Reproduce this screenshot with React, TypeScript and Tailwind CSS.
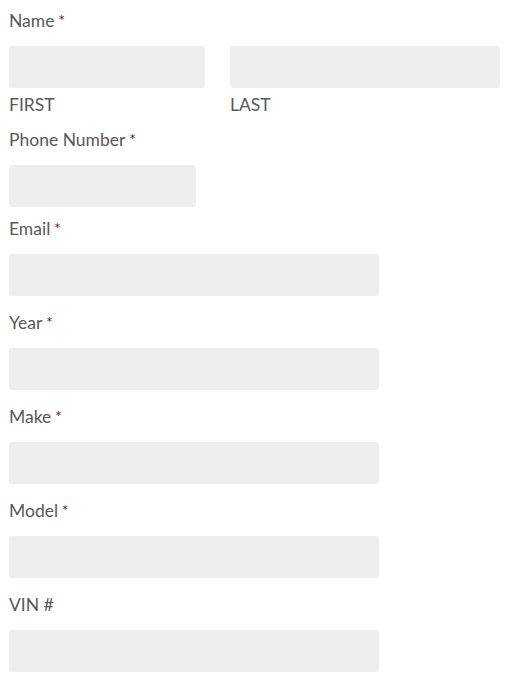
const labelCls = "block text-[17.5px] leading-[26px] text-[#585858]";
const inputCls = "block h-[42px] rounded-[3px] bg-[#eee] outline-none";

function Req() {
  return <span className="ml-[4px] align-top text-[15px] leading-[24px] text-[#8b0000]">*</span>;
}

function Field({ label, required, width }: { label: string; required?: boolean; width: string }) {
  return (
    <div className="mb-[13px]">
      <label className={`${labelCls} pt-[1px]`}>
        {label}
        {required ? <Req /> : null}
      </label>
      <input className={`${inputCls} mt-[12px] ${width}`} />
    </div>
  );
}

export default function App() {
  return (
    <div className="bg-white pl-[9px] pt-[8px]" style={{ fontFamily: "Lato, 'Liberation Sans', sans-serif" }}>
      <div className="mb-[9px]">
        <label className={labelCls}>
          Name
          <Req />
        </label>
        <div className="mt-[12px] flex gap-[25px]">
          <div className="w-[196px]">
            <input className={`${inputCls} w-full`} />
            <span className={`${labelCls} mt-[4px]`}>FIRST</span>
          </div>
          <div className="w-[270px]">
            <input className={`${inputCls} w-full`} />
            <span className={`${labelCls} mt-[4px]`}>LAST</span>
          </div>
        </div>
      </div>
      <div className="mb-[8px]">
        <label className={labelCls}>
          Phone Number
          <Req />
        </label>
        <input className={`${inputCls} mt-[12px] w-[187px]`} />
      </div>
      <Field label="Email" required width="w-[370px]" />
      <Field label="Year" required width="w-[370px]" />
      <Field label="Make" required width="w-[370px]" />
      <Field label="Model" required width="w-[370px]" />
      <Field label="VIN #" width="w-[370px]" />
    </div>
  );
}
